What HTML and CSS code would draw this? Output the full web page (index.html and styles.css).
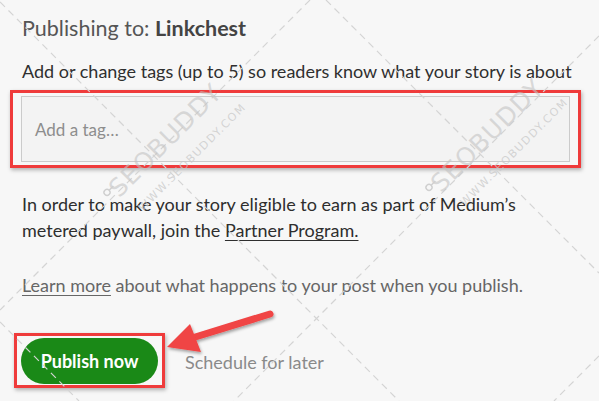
FILE: index.html
```html
<!DOCTYPE html>
<html lang="en">
<head>
<meta charset="utf-8">
<title>Publishing to Linkchest</title>
<link rel="stylesheet" href="styles.css">
</head>
<body>
<div class="page">
  <h1 class="title">Publishing to: <strong>Linkchest</strong></h1>
  <p class="hint">Add or change tags (up to 5) so readers know what your story is about</p>
  <div class="highlight tag-highlight">
    <div class="tag-input">Add a tag…</div>
  </div>
  <p class="partner">In order to make your story eligible to earn as part of Medium’s metered paywall, join the <a href="#">Partner Program.</a></p>
  <p class="learn"><a href="#">Learn more</a> about what happens to your post when you publish.</p>
  <div class="actions">
    <div class="highlight btn-highlight">
      <button class="publish">Publish now</button>
    </div>
    <span class="schedule">Schedule for later</span>
  </div>
</div>

<svg class="watermark" width="599" height="401" viewBox="0 0 599 401">
  <g stroke="#d4d4d4" stroke-width="1.2" stroke-dasharray="7 5" fill="none">
    <line x1="0" y1="2" x2="399" y2="401"/>
    <line x1="326" y1="0" x2="599" y2="273"/>
    <line x1="0" y1="322" x2="79" y2="401"/>
    <line x1="310" y1="0" x2="0" y2="310"/>
    <line x1="599" y1="36" x2="234" y2="401"/>
    <line x1="599" y1="356" x2="554" y2="401"/>
  </g>
  <g transform="translate(165 140) rotate(-45)">
    <text class="wm-big" x="0" y="9" text-anchor="middle">SEOBUDDY</text>
    <text class="wm-small" x="7" y="35" text-anchor="middle">WWW.SEOBUDDY.COM</text>
    <circle cx="-78" cy="-4" r="3" fill="none" stroke="#cfcfcf" stroke-width="1.4"/>
    <line x1="-75" y1="-4" x2="-69" y2="-4" stroke="#cfcfcf" stroke-width="1.4"/>
  </g>
  <g transform="translate(487 135) rotate(-45)">
    <text class="wm-big" x="0" y="9" text-anchor="middle">SEOBUDDY</text>
    <text class="wm-small" x="7" y="35" text-anchor="middle">WWW.SEOBUDDY.COM</text>
    <circle cx="-78" cy="-4" r="3" fill="none" stroke="#cfcfcf" stroke-width="1.4"/>
    <line x1="-75" y1="-4" x2="-69" y2="-4" stroke="#cfcfcf" stroke-width="1.4"/>
  </g>
</svg>

<svg class="arrow" width="599" height="401" viewBox="0 0 599 401">
  <defs>
    <filter id="sh" x="-20%" y="-20%" width="140%" height="140%">
      <feDropShadow dx="1" dy="2" stdDeviation="1.5" flood-color="#000" flood-opacity="0.35"/>
    </filter>
  </defs>
  <g filter="url(#sh)" fill="#f04444">
    <line x1="270" y1="314" x2="192" y2="338" stroke="#f04444" stroke-width="7" stroke-linecap="round"/>
    <polygon points="167,347 190,324 201,352"/>
  </g>
</svg>
</body>
</html>
```

FILE: styles.css
```css
html, body {
  margin: 0;
  padding: 0;
}

body {
  background: #f7f7f7;
  font-family: "Lato", "Noto Sans", sans-serif;
  color: #333;
  width: 599px;
  height: 401px;
  overflow: hidden;
  position: relative;
}

.page {
  padding: 14px 0 0 22px;
  position: relative;
  z-index: 1;
}

.title {
  margin: 0;
  font-size: 21.5px;
  line-height: 28px;
  font-weight: 400;
  color: #555;
}

.title strong {
  font-weight: 700;
  color: #444;
}

.hint {
  margin: 17px 0 0;
  font-size: 18px;
  line-height: 24px;
  color: #2f2f2f;
}

.highlight {
  border: 3px solid #ef3b3b;
  box-shadow: 1px 2px 4px rgba(0, 0, 0, 0.3);
  box-sizing: border-box;
}

.tag-highlight {
  margin: 7px 0 0 -12px;
  width: 571px;
  padding: 3px 8px;
}

.tag-input {
  height: 66px;
  box-sizing: border-box;
  border: 1px solid #cbcbcb;
  background: #f3f3f3;
  padding: 0 13px;
  display: flex;
  align-items: center;
  font-size: 17px;
  color: #8d8d8d;
}

.partner {
  margin: 23px 0 0;
  font-size: 18px;
  line-height: 26px;
  color: #2e2e2e;
  width: 530px;
}

.partner a,
.learn a {
  color: inherit;
  text-decoration: underline;
  text-underline-offset: 3px;
}

.learn {
  margin: 29px 0 0;
  font-size: 18px;
  line-height: 26px;
  color: #666;
}

.actions {
  margin: 35px 0 0 -8px;
  display: flex;
  align-items: center;
  gap: 20px;
}

.btn-highlight {
  padding: 2px 4px;
  width: 151px;
  height: 55px;
}

.publish {
  width: 137px;
  height: 46px;
  border: 0;
  border-radius: 23px;
  background: #1a8917;
  color: #fff;
  font-family: "Lato", "Noto Sans", sans-serif;
  font-size: 18px;
  font-weight: 700;
  padding: 0;
}

.schedule {
  font-size: 18px;
  color: #8a8a8a;
  margin-top: 2px;
}

.watermark,
.arrow {
  position: absolute;
  left: 0;
  top: 0;
  pointer-events: none;
}

.watermark {
  z-index: 2;
}

.arrow {
  z-index: 3;
}

.wm-big {
  font-family: "DejaVu Sans", sans-serif;
  font-size: 25px;
  font-weight: 400;
  fill: rgba(195, 195, 195, 0.6);
  letter-spacing: 1px;
}

.wm-small {
  font-family: "DejaVu Sans", sans-serif;
  font-size: 11px;
  fill: rgba(200, 200, 200, 0.75);
  letter-spacing: 1.5px;
}
```
